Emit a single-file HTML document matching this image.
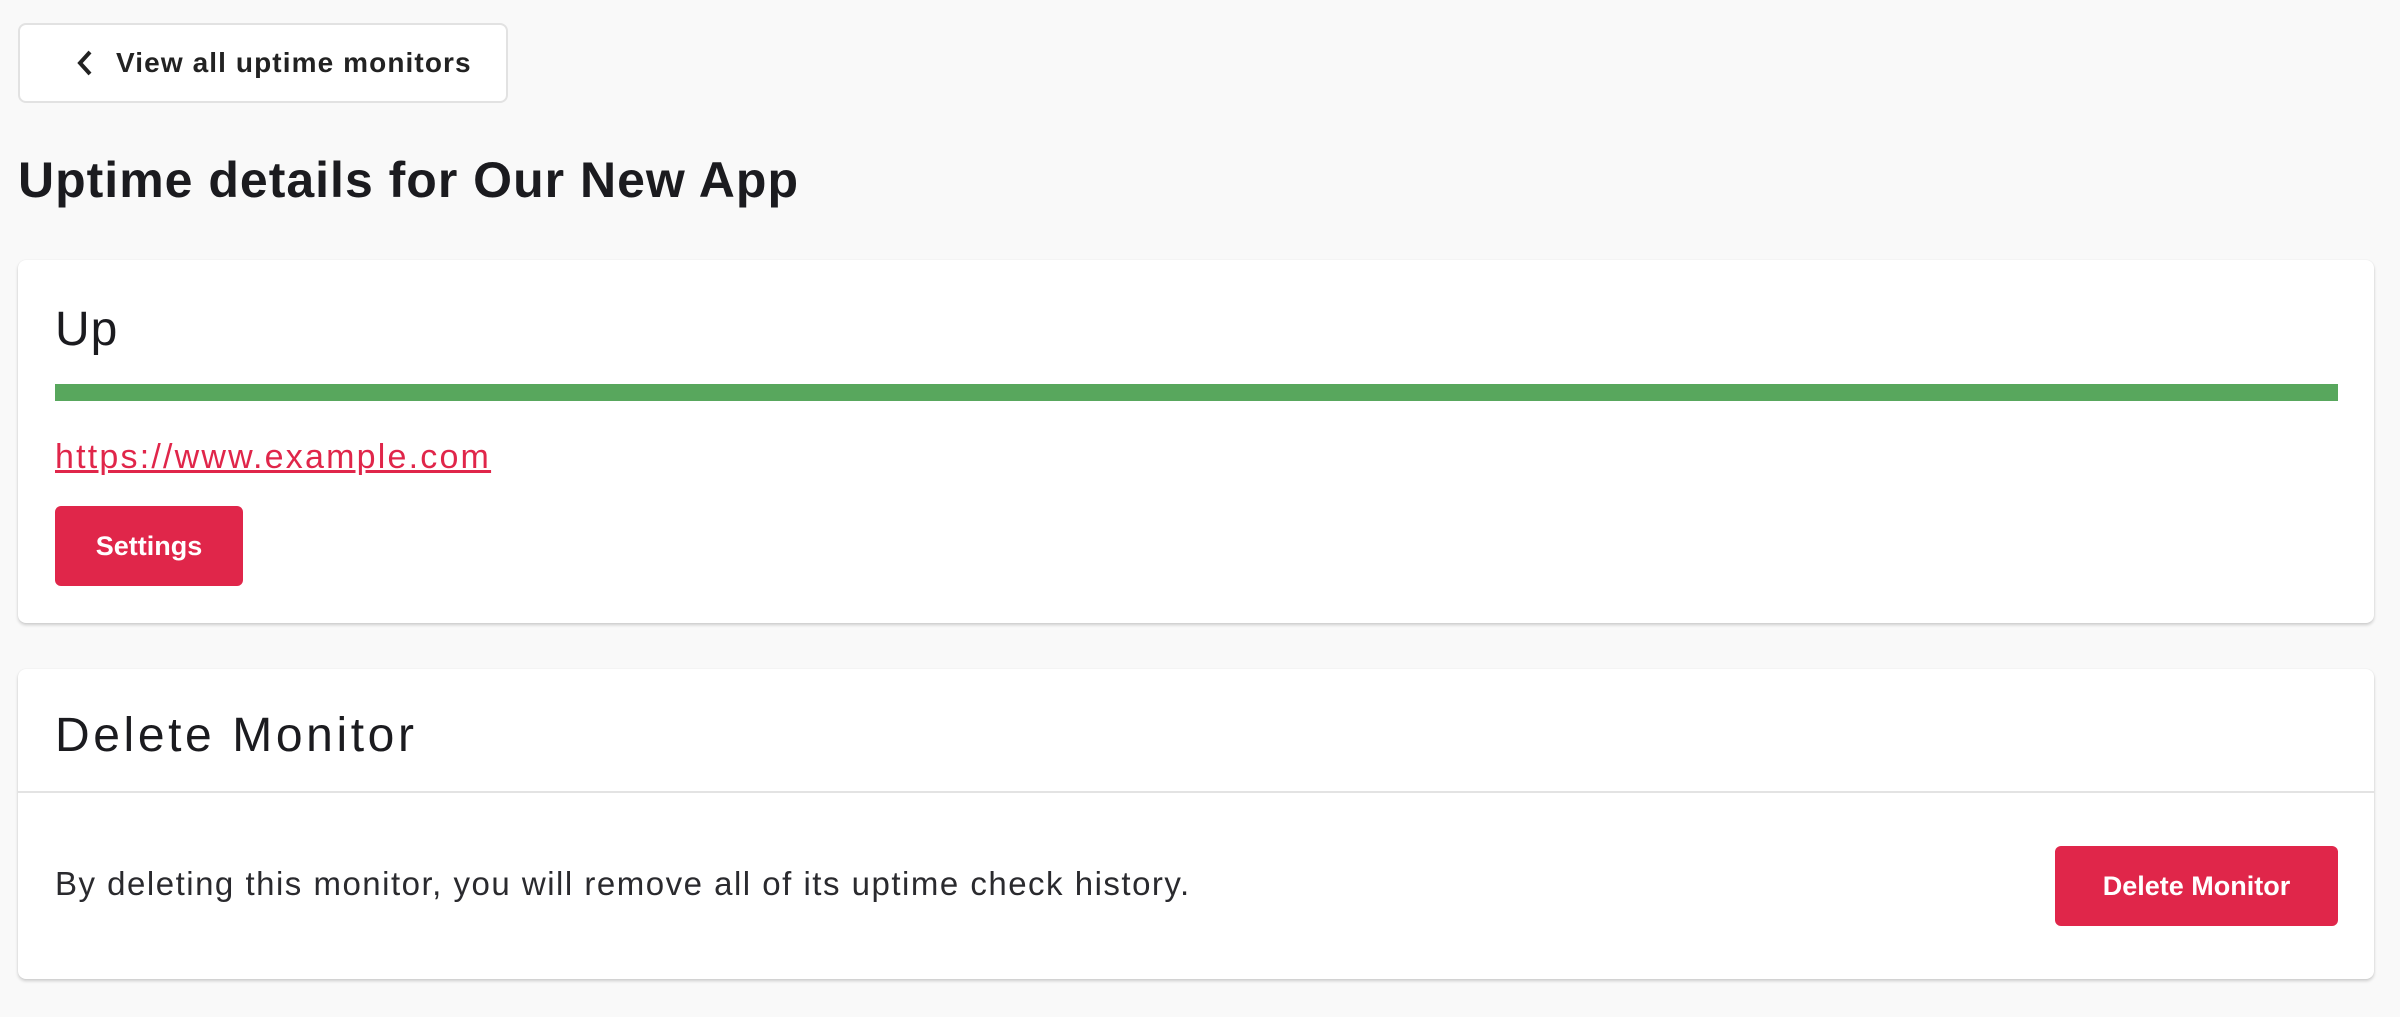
<!DOCTYPE html>
<html><head><meta charset="utf-8"><style>
*{box-sizing:border-box;margin:0;padding:0}
body{width:2400px;height:1017px;background:#f9f9f9;font-family:"Liberation Sans",sans-serif;color:#1b1b1f;position:relative;overflow:hidden}
.back{position:absolute;left:18px;top:23px;width:490px;height:80px;background:#fff;border:2px solid #e2e2e2;border-radius:8px;font-size:28px;font-weight:bold;display:flex;align-items:center;padding-left:56px;color:#222;letter-spacing:1.1px}
.back svg{margin-right:22px}
h1{position:absolute;left:18px;top:150px;font-size:50px;font-weight:bold;line-height:60px;letter-spacing:1px}
.card{position:absolute;left:18px;width:2356px;background:#fff;border-radius:8px;box-shadow:0 2px 3px rgba(0,0,0,.18),0 0 1px rgba(0,0,0,.1)}
.up{position:absolute;left:37px;top:42px;font-size:48px;line-height:56px;letter-spacing:1px}
.bar{position:absolute;left:37px;top:124px;width:2283px;height:17px;background:#58a75d}
.link{position:absolute;left:37px;top:176px;font-size:34px;line-height:42px;color:#e0264a;text-decoration:underline;letter-spacing:2.2px}
.btn{position:absolute;background:#e0264a;color:#fff;border-radius:6px;font-weight:bold;font-size:27px;display:flex;align-items:center;justify-content:center}
.h2{position:absolute;left:37px;top:38px;font-size:48px;line-height:58px;letter-spacing:3.6px}
.div{position:absolute;left:0;right:0;top:122px;height:2px;background:#e3e3e3}
.txt{position:absolute;left:37px;top:194px;font-size:33px;line-height:42px;color:#2a2a2e;letter-spacing:1.5px}
</style></head><body>
<div class="back"><svg width="18" height="28" viewBox="0 0 18 28"><path d="M14 3 L4 14 L14 25" fill="none" stroke="#222" stroke-width="4"/></svg>View all uptime monitors</div>
<h1>Uptime details for Our New App</h1>
<div class="card" style="top:260px;height:363px">
<div class="up">Up</div>
<div class="bar"></div>
<div class="link">https://www.example.com</div>
<div class="btn" style="left:37px;top:246px;width:188px;height:80px">Settings</div>
</div>
<div class="card" style="top:669px;height:310px">
<div class="h2">Delete Monitor</div>
<div class="div"></div>
<div class="txt">By deleting this monitor, you will remove all of its uptime check history.</div>
<div class="btn" style="left:2037px;top:177px;width:283px;height:80px">Delete Monitor</div>
</div>
</body></html>
